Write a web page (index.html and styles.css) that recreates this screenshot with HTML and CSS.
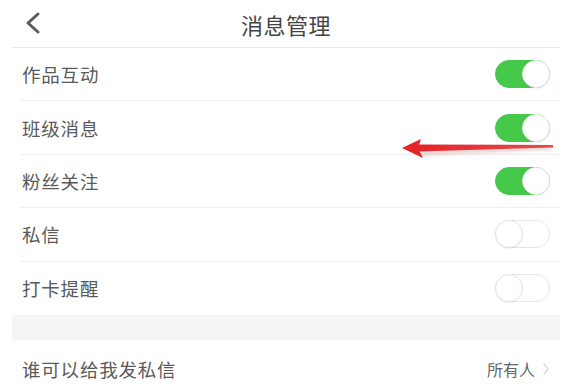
FILE: index.html
```html
<!DOCTYPE html>
<html lang="zh-CN">
<head>
<meta charset="utf-8">
<title>消息管理</title>
<link rel="stylesheet" href="styles.css">
</head>
<body>
<div class="page">
  <header class="nav">
    <span class="back">
      <svg width="16" height="24" viewBox="0 0 16 24"><polyline points="13,3 3,12 13,21" fill="none" stroke="#5a5a5a" stroke-width="3" stroke-linecap="round" stroke-linejoin="round"/></svg>
    </span>
    <h1 class="title">消息管理</h1>
  </header>
  <ul class="list">
    <li class="row"><span class="label">作品互动</span><span class="switch on"><span class="knob"></span></span></li>
    <li class="row"><span class="label">班级消息</span><span class="switch on"><span class="knob"></span></span></li>
    <li class="row"><span class="label">粉丝关注</span><span class="switch on"><span class="knob"></span></span></li>
    <li class="row"><span class="label">私信</span><span class="switch"><span class="knob"></span></span></li>
    <li class="row last"><span class="label">打卡提醒</span><span class="switch"><span class="knob"></span></span></li>
  </ul>
  <div class="gap"></div>
  <div class="row link"><span class="label">谁可以给我发私信</span><span class="value">所有人<svg class="chev" width="8" height="12" viewBox="0 0 8 12"><polyline points="2,1 6,6 2,11" fill="none" stroke="#dcdcdc" stroke-width="1.6" stroke-linecap="round" stroke-linejoin="round"/></svg></span></div>
</div>
<svg class="arrow" width="585" height="384" viewBox="0 0 585 384">
  <defs>
    <linearGradient id="g" x1="0" x2="1" y1="0" y2="0">
      <stop offset="0" stop-color="#e3262b"/>
      <stop offset="1" stop-color="#e84a4c"/>
    </linearGradient>
    <filter id="s" x="-10%" y="-50%" width="120%" height="200%"><feGaussianBlur stdDeviation="1.6"/></filter>
  </defs>
  <polygon points="420,148 552,147 552,150 420,156" fill="#c89090" opacity="0.35" filter="url(#s)"/>
  <polygon points="418,144.5 553,145 553,147.5 418,151.5" fill="url(#g)"/>
  <polygon points="402,148 421,139 418,148 423,158" fill="#e3242a"/>
</svg>
</body>
</html>
```
FILE: styles.css
```css
* { box-sizing: border-box; margin: 0; padding: 0; }
html, body { background: #fff; }
body {
  width: 585px;
  height: 384px;
  overflow: hidden;
  font-family: "Noto Sans CJK SC", "Noto Sans", sans-serif;
  color: #555;
}
.page {
  margin-left: 12px;
  width: 548px;
}
.nav {
  height: 48px;
  border-bottom: 1px solid #ececec;
  display: flex;
  align-items: center;
  justify-content: center;
  position: relative;
}
.back {
  position: absolute;
  left: 13px;
  top: 11px;
  display: flex;
}
.title {
  font-size: 22px;
  font-weight: 400;
  color: #444;
  letter-spacing: 0.5px;
}
.list { list-style: none; }
.row {
  height: 53.4px;
  margin-left: 8px;
  padding-left: 2px;
  padding-right: 10px;
  border-bottom: 1px solid #efefef;
  display: flex;
  align-items: center;
  justify-content: space-between;
}
.row.last { border-bottom: none; }
.label {
  font-size: 18.5px;
  color: #5a5a5a;
  letter-spacing: 0.8px;
}
.switch {
  width: 55px;
  height: 28px;
  border-radius: 14px;
  border: 1px solid #e6e6e6;
  background: #fff;
  position: relative;
  display: block;
}
.switch .knob {
  position: absolute;
  top: -1px;
  left: -1px;
  width: 28px;
  height: 28px;
  border-radius: 50%;
  background: #fff;
  border: 1px solid #e4e4e4;
  box-shadow: 0 1px 2px rgba(0,0,0,0.06);
}
.switch.on {
  background: #46c94b;
  border-color: #46c94b;
}
.switch.on .knob {
  left: auto;
  right: -1px;
  border-color: #eaeaea;
}
.gap {
  height: 25px;
  background: #f5f5f5;
}
.row.link {
  height: 54px;
  border-bottom: none;
  padding-right: 10px;
  margin-top: 2px;
}
.value {
  font-size: 16px;
  color: #666;
  display: flex;
  align-items: center;
  gap: 7px;
}
.arrow {
  position: absolute;
  left: 0;
  top: 0;
  pointer-events: none;
}
```
